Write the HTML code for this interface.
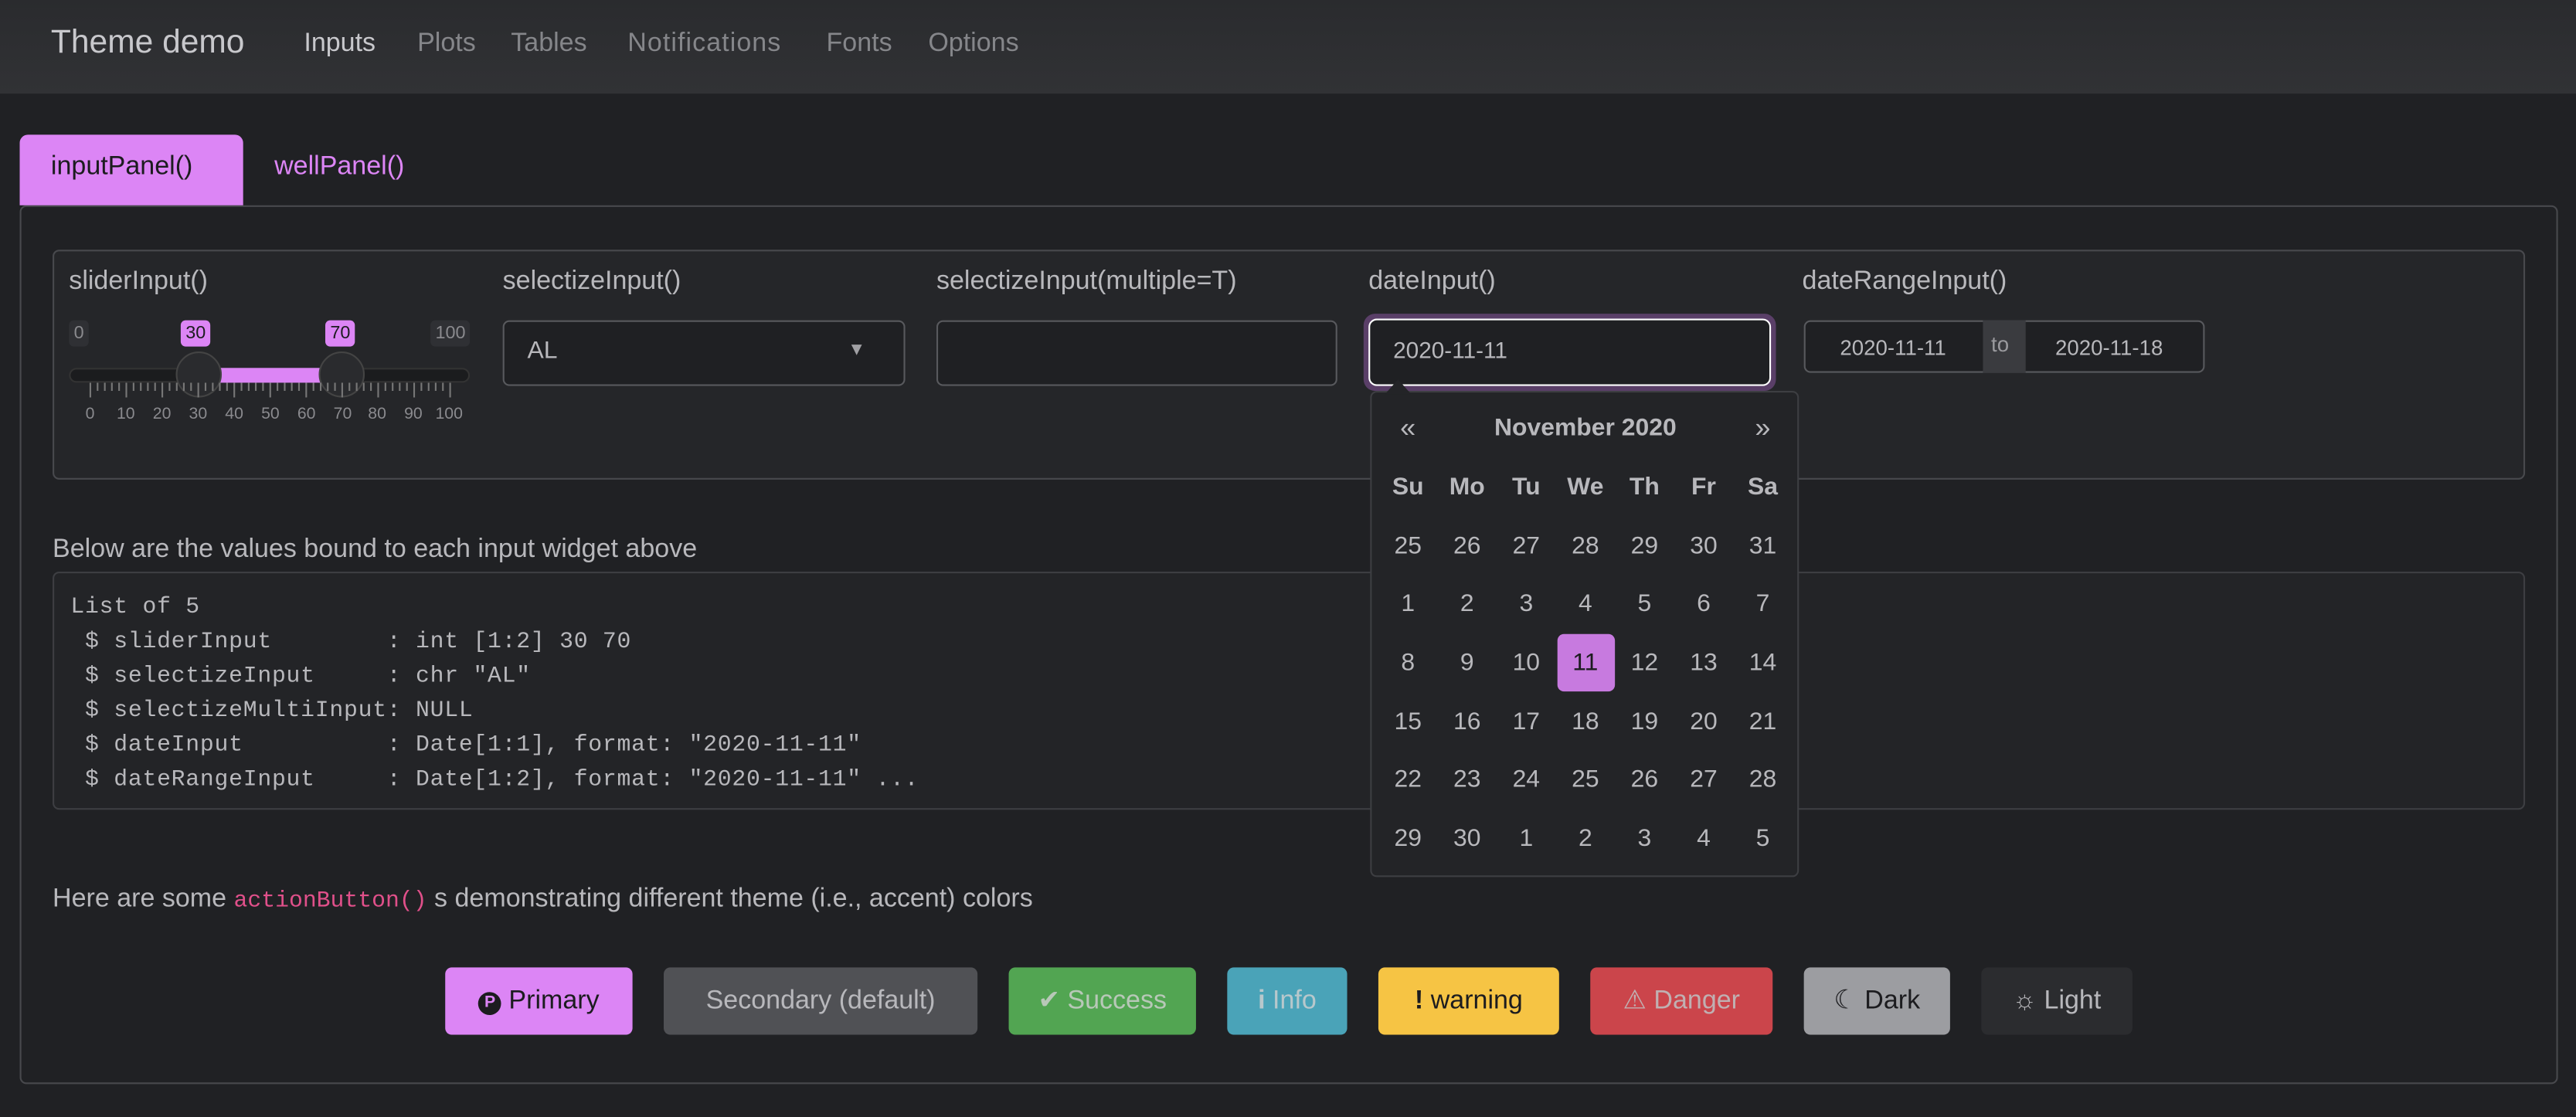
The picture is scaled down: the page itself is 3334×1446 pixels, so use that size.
<!DOCTYPE html>
<html><head><meta charset="utf-8"><style>
html,body{margin:0;padding:0;background:#202124;overflow:hidden;width:3334px;height:1444px}
#w{position:absolute;left:0;top:0;width:1568px;height:680px;transform:scale(2.12628);transform-origin:0 0;font-family:"Liberation Sans",sans-serif;color:#b5b5b9;font-size:16px}
.a{position:absolute;white-space:nowrap}
.nav{left:0;top:0;width:1568px;height:57px;background:linear-gradient(#2a2b2e,#313235)}
.lbl{font-size:16px;color:#b8b8bc;top:163px}
.box{position:absolute;border:1px solid #555;border-radius:4px;box-sizing:border-box;background:#1f2023}
.mono{font-family:"Liberation Mono",monospace;font-size:14px;line-height:21px;color:#b8b8bc;white-space:pre;letter-spacing:0.35px}
.btn{position:absolute;top:589px;height:41px;border-radius:4px;line-height:41px;text-align:center;font-size:16px}
.cal{position:absolute;left:834px;top:238px;width:261px;height:296px;background:#232427;border:1px solid #3d3e42;border-radius:4px;box-sizing:border-box}
.cal table{position:absolute;left:4px;top:4px;border-collapse:collapse}
.cal td{width:36px;height:35.7px;text-align:center;font-size:15px;color:#b8b8bc;padding:0}
.o{color:#808084}
.tag{position:absolute;top:195px;height:16px;font-size:11px;line-height:16px;border-radius:3px;padding:0 3px}
</style></head><body><div id="w">
<div class="a nav"></div>
<div class="a" style="left:31px;top:15px;font-size:20px;color:#c8c8cc">Theme demo</div>
<div class="a" style="left:185px;top:18px;font-size:16px;color:#c8c8cc">Inputs</div>
<div class="a" style="left:254px;top:18px;color:#85868a">Plots</div>
<div class="a" style="left:311px;top:18px;color:#85868a">Tables</div>
<div class="a" style="left:382px;top:18px;color:#85868a;letter-spacing:0.5px">Notifications</div>
<div class="a" style="left:503px;top:18px;color:#85868a">Fonts</div>
<div class="a" style="left:565px;top:18px;color:#85868a">Options</div>

<div class="box" style="left:12px;top:125px;width:1545px;height:535px;border-color:#48494d;background:#202124"></div>
<div class="a" style="left:12px;top:82px;width:136px;height:43px;background:#dc85f5;border-radius:5px 5px 0 0"></div>
<div class="a" style="left:31px;top:93px;color:#1c1c1f">inputPanel()</div>
<div class="a" style="left:167px;top:93px;color:#dc85f5">wellPanel()</div>

<div class="box" style="left:32px;top:152px;width:1505px;height:140px;background:#252629;border-color:#48494d"></div>
<div class="a lbl" style="left:42px">sliderInput()</div>
<div class="a lbl" style="left:306px">selectizeInput()</div>
<div class="a lbl" style="left:570px">selectizeInput(multiple=T)</div>
<div class="a lbl" style="left:833px">dateInput()</div>
<div class="a lbl" style="left:1097px">dateRangeInput()</div>

<!-- slider -->
<div class="tag" style="left:42px;background:#2f3034;color:#8a8a8e">0</div>
<div class="tag" style="left:110px;background:#dc85f5;color:#1c1c1f">30</div>
<div class="tag" style="left:198px;background:#dc85f5;color:#1c1c1f">70</div>
<div class="tag" style="left:262px;background:#2f3034;color:#8a8a8e">100</div>
<div class="a" style="left:42px;top:224px;width:244px;height:9px;background:#1b1c1e;border:1px solid #333;border-radius:5px;box-sizing:border-box"></div>
<div class="a" style="left:121px;top:224px;width:88px;height:9px;background:#dc85f5"></div>
<div class="a" style="left:107px;top:214px;width:28px;height:28px;border-radius:50%;background:#2a2b2e;border:1px solid #444;box-sizing:border-box"></div>
<div class="a" style="left:194px;top:214px;width:28px;height:28px;border-radius:50%;background:#2a2b2e;border:1px solid #444;box-sizing:border-box"></div>
<svg class="a" style="left:42px;top:233px" width="250" height="12"><g stroke="#777" stroke-width="1">
<path d="M13 0v9M34.9 0v9M56.8 0v9M78.7 0v9M100.6 0v9M122.5 0v9M144.4 0v9M166.3 0v9M188.2 0v9M210.1 0v9M232 0v9"/>
<path d="M17.4 0v5M21.8 0v5M26.1 0v5M30.5 0v5M39.3 0v5M43.7 0v5M48 0v5M52.4 0v5M61.2 0v5M65.6 0v5M69.9 0v5M74.3 0v5M83.1 0v5M87.5 0v5M91.8 0v5M96.2 0v5M105 0v5M109.4 0v5M113.7 0v5M118.1 0v5M126.9 0v5M131.3 0v5M135.6 0v5M140 0v5M148.8 0v5M153.2 0v5M157.5 0v5M161.9 0v5M170.7 0v5M175.1 0v5M179.4 0v5M183.8 0v5M192.6 0v5M197 0v5M201.3 0v5M205.7 0v5M214.5 0v5M218.9 0v5M223.2 0v5M227.6 0v5"/></g></svg>
<div class="a" style="left:42px;top:247px;font-size:10px;color:#8a8a8e">
<span style="position:absolute;left:10px">0</span><span style="position:absolute;left:29px">10</span><span style="position:absolute;left:51px">20</span><span style="position:absolute;left:73px">30</span><span style="position:absolute;left:95px">40</span><span style="position:absolute;left:117px">50</span><span style="position:absolute;left:139px">60</span><span style="position:absolute;left:161px">70</span><span style="position:absolute;left:182px">80</span><span style="position:absolute;left:204px">90</span><span style="position:absolute;left:223px">100</span></div>

<div class="box" style="left:306px;top:195px;width:245px;height:40px;border-color:#58595d"></div>
<div class="a" style="left:321px;top:205px;font-size:15px;color:#b8b8bc">AL</div>
<div class="a" style="left:516px;top:207px;font-size:11px;color:#a0a0a4">▼</div>
<div class="box" style="left:570px;top:195px;width:244px;height:40px;border-color:#58595d"></div>

<div class="a" style="left:830px;top:191px;width:251px;height:47px;border-radius:7px;background:#5a3f68"></div>
<div class="box" style="left:833px;top:194px;width:245px;height:41px;border:1.5px solid #fff;border-radius:5px"></div>
<div class="a" style="left:848px;top:205px;font-size:14px;color:#b8b8bc">2020-11-11</div>

<div class="box" style="left:1098px;top:195px;width:244px;height:32px;border-color:#58595d"></div>
<div class="a" style="left:1207px;top:195px;width:26px;height:32px;background:#3a3b3f"></div>
<div class="a" style="left:1120px;top:204px;font-size:13px;color:#b8b8bc">2020-11-11</div>
<div class="a" style="left:1212px;top:202px;font-size:13px;color:#9a9a9e">to</div>
<div class="a" style="left:1251px;top:204px;font-size:13px;color:#b8b8bc">2020-11-18</div>

<div class="a" style="left:32px;top:326px;color:#b8b8bc">Below are the values bound to each input widget above</div>
<div class="box" style="left:32px;top:348px;width:1505px;height:145px;background:#232427;border-color:#3d3e42"></div>
<div class="a mono" style="left:43px;top:360px">List of 5
 $ sliderInput        : int [1:2] 30 70
 $ selectizeInput     : chr "AL"
 $ selectizeMultiInput: NULL
 $ dateInput          : Date[1:1], format: "2020-11-11"
 $ dateRangeInput     : Date[1:2], format: "2020-11-11" ...</div>

<div class="cal">
<svg style="position:absolute;left:8px;top:-8px" width="16" height="9"><path d="M0 9L8 0L16 9Z" fill="#232427"/></svg>
<table>
<tr><td style="font-size:17px">«</td><td colspan="5" style="font-weight:bold;font-size:15px">November 2020</td><td style="font-size:17px">»</td></tr>
<tr><td><b>Su</b></td><td><b>Mo</b></td><td><b>Tu</b></td><td><b>We</b></td><td><b>Th</b></td><td><b>Fr</b></td><td><b>Sa</b></td></tr>
<tr><td class="o">25</td><td class="o">26</td><td class="o">27</td><td class="o">28</td><td class="o">29</td><td class="o">30</td><td class="o">31</td></tr>
<tr><td>1</td><td>2</td><td>3</td><td>4</td><td>5</td><td>6</td><td>7</td></tr>
<tr><td>8</td><td>9</td><td>10</td><td><div style="width:35px;height:35px;line-height:35px;margin:auto;background:#c77adf;color:#1c1c1f;border-radius:4px">11</div></td><td>12</td><td>13</td><td>14</td></tr>
<tr><td>15</td><td>16</td><td>17</td><td>18</td><td>19</td><td>20</td><td>21</td></tr>
<tr><td>22</td><td>23</td><td>24</td><td>25</td><td>26</td><td>27</td><td>28</td></tr>
<tr><td>29</td><td>30</td><td class="o">1</td><td class="o">2</td><td class="o">3</td><td class="o">4</td><td class="o">5</td></tr>
</table></div>

<div class="a" style="left:32px;top:539px;color:#b8b8bc">Here are some <span style="font-family:'Liberation Mono',monospace;font-size:14px;color:#e0508a">actionButton()</span> s demonstrating different theme (i.e., accent) colors</div>

<div class="btn" style="left:271px;width:114px;background:#dc85f5;color:#1c1c1f"><span style="display:inline-block;width:14px;height:14px;border-radius:50%;background:#1c1c1f;color:#dc85f5;font-size:10px;line-height:14px;font-weight:bold;vertical-align:1px">P</span> Primary</div>
<div class="btn" style="left:404px;width:191px;background:#505155;color:#b8b8bc">Secondary (default)</div>
<div class="btn" style="left:614px;width:114px;background:#52a552;color:#b8c8b8">✔ Success</div>
<div class="btn" style="left:747px;width:73px;background:#4aa3b8;color:#b8c8cc"><b>i</b> Info</div>
<div class="btn" style="left:839px;width:110px;background:#f6c444;color:#1c1c1f"><b>!</b> warning</div>
<div class="btn" style="left:968px;width:111px;background:#cb454b;color:#c0b0b2">⚠ Danger</div>
<div class="btn" style="left:1098px;width:89px;background:#9c9da1;color:#1c1c1f">☾ Dark</div>
<div class="btn" style="left:1206px;width:92px;background:#2b2c2f;color:#b8b8bc">☼ Light</div>
</div></body></html>
